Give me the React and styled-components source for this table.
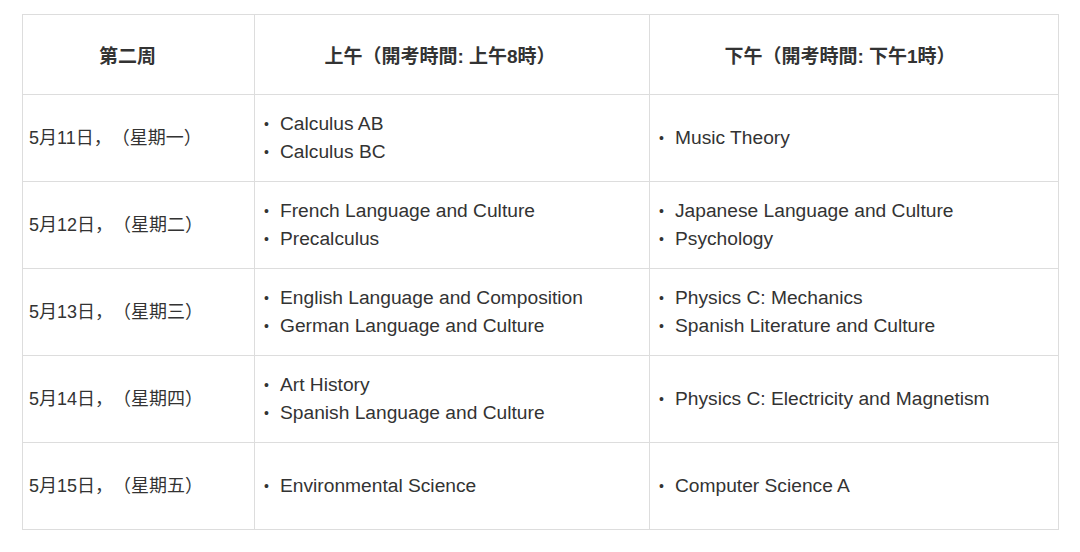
import styled, { createGlobalStyle } from "styled-components";

const GlobalStyle = createGlobalStyle`
  html, body {
    margin: 0;
    padding: 0;
    background: #ffffff;
  }
  body {
    font-family: "Liberation Sans", Arial, "Noto Sans CJK SC", sans-serif;
    color: #333333;
    text-spacing-trim: space-all;
  }
`;

const Page = styled.div`
  padding: 14px 23px 0 22px;
`;

const Table = styled.table`
  width: 1036px;
  border-collapse: collapse;
  table-layout: fixed;
  font-size: 19.2px;
`;

const Col = styled.col`
  width: ${({ w }) => w}px;
`;

const HeadCell = styled.th`
  height: 79px;
  padding: 0 ${({ shift }) => 6 + shift * 2}px 0 6px;
  border: 1px solid #dddddd;
  font-weight: 700;
  font-size: 19px;
  text-align: center;
  vertical-align: middle;
  color: #333333;
`;

const Cell = styled.td`
  height: 86px;
  padding: 0 6px;
  border: 1px solid #dddddd;
  vertical-align: middle;
  line-height: 28px;
`;

const DateCell = styled(Cell)`
  font-size: 18px;
`;

const List = styled.ul`
  margin: 0;
  padding: 0 0 0 12px;
  list-style: none;
`;

const Item = styled.li`
  position: relative;
  padding-left: 7px;
  &::before {
    content: "•";
    position: absolute;
    left: -9px;
    top: 0;
    font-size: 14px;
  }
`;

const rows = [
  { date: "5月11日，（星期一）", am: ["Calculus AB", "Calculus BC"], pm: ["Music Theory"] },
  { date: "5月12日，（星期二）", am: ["French Language and Culture", "Precalculus"], pm: ["Japanese Language and Culture", "Psychology"] },
  { date: "5月13日，（星期三）", am: ["English Language and Composition", "German Language and Culture"], pm: ["Physics C: Mechanics", "Spanish Literature and Culture"] },
  { date: "5月14日，（星期四）", am: ["Art History", "Spanish Language and Culture"], pm: ["Physics C: Electricity and Magnetism"] },
  { date: "5月15日，（星期五）", am: ["Environmental Science"], pm: ["Computer Science A"] },
];

const Subjects = ({ items }) => (
  <List>
    {items.map((s) => (
      <Item key={s}>{s}</Item>
    ))}
  </List>
);

const App = () => {
  return (
    <Page>
      <GlobalStyle />
      <Table>
        <colgroup>
          <Col w={232} />
          <Col w={395} />
          <Col w={409} />
        </colgroup>
        <thead>
          <tr>
            <HeadCell shift={11}>第二周</HeadCell>
            <HeadCell shift={12}>上午（開考時間: 上午8時）</HeadCell>
            <HeadCell shift={14}>下午（開考時間: 下午1時）</HeadCell>
          </tr>
        </thead>
        <tbody>
          {rows.map((r) => (
            <tr key={r.date}>
              <DateCell>{r.date}</DateCell>
              <Cell><Subjects items={r.am} /></Cell>
              <Cell><Subjects items={r.pm} /></Cell>
            </tr>
          ))}
        </tbody>
      </Table>
    </Page>
  );
};

export default App;
